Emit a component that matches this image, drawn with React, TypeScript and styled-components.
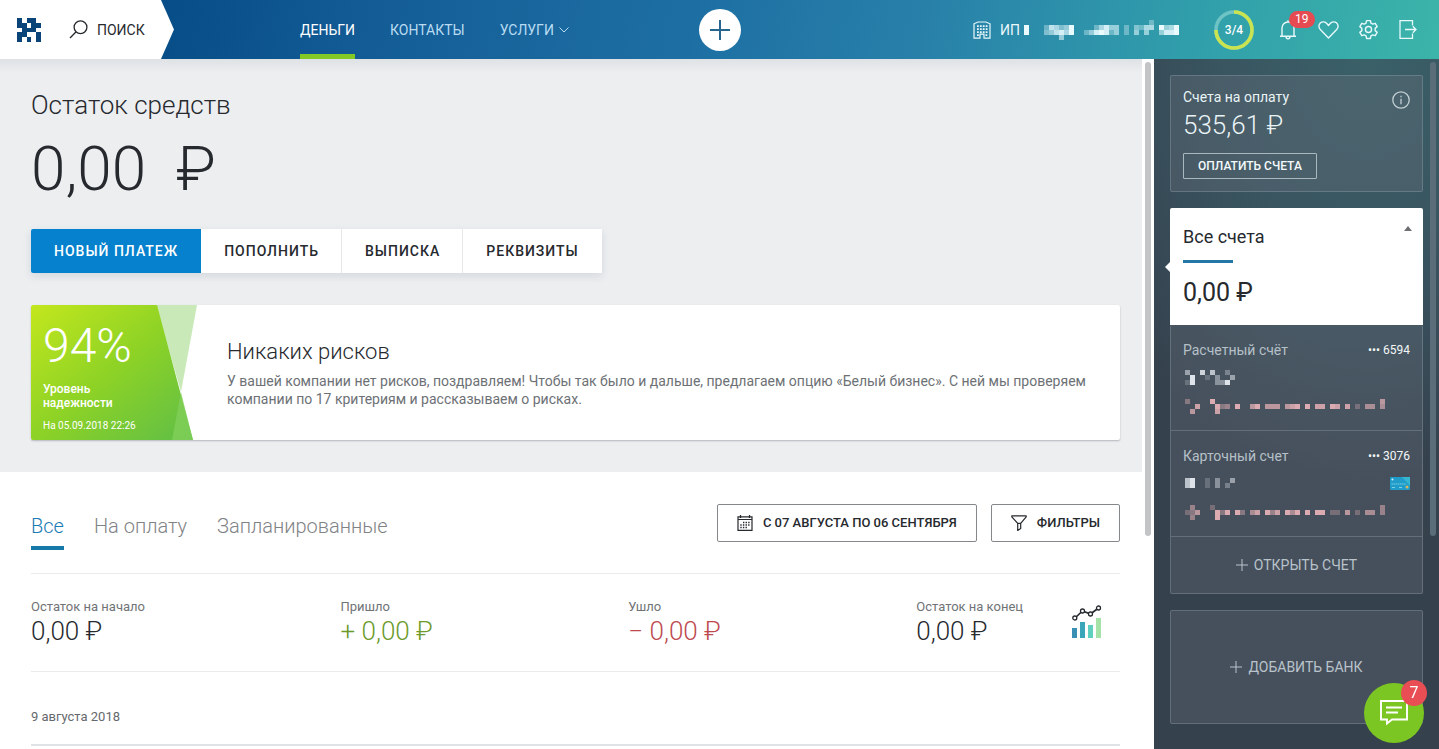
import React from "react";
import styled, { createGlobalStyle } from "styled-components";

const GlobalStyle = createGlobalStyle`
  * { box-sizing: border-box; }
  html, body { margin: 0; height: 100%; }
  #root { height: 100vh; }
  body {
    font-family: Roboto, "Open Sans", sans-serif;
    color: #26292e;
    background: #fff;
    overflow: hidden;
  }
  button { font-family: inherit; cursor: pointer; margin: 0; }
  a { text-decoration: none; }
  p, h1, h2 { margin: 0; }
  svg { display: block; flex: none; }
`;

const Page = styled.div`
  display: flex;
  flex-direction: column;
  height: 100vh;
`;

/* ---------- header ---------- */

const Header = styled.header`
  flex: none;
  display: grid;
  grid-template-columns: 1fr auto 1fr;
  height: 59px;
  background: linear-gradient(100deg, #074d87 11%, #155f98 29%, #1d6fa3 48%, #2880a9 64%, #319fab 83%, #3bb4a9 100%);
`;

const HeaderLeft = styled.div`
  display: flex;
`;

const Brand = styled.div`
  flex: none;
  display: flex;
  align-items: center;
  gap: 28px;
  width: 174px;
  padding-left: 17px;
  background: #fff;
  clip-path: polygon(0 0, 161px 0, 100% 50%, 161px 100%, 0 100%);
`;

const SearchButton = styled.button`
  display: flex;
  align-items: center;
  gap: 9px;
  padding: 0;
  border: 0;
  background: none;
  color: #26292e;
  font-size: 14px;
  line-height: 20px;
`;

const Nav = styled.nav`
  display: flex;
  gap: 35px;
  padding-left: 126px;
`;

const NavLink = styled.a<{ $active?: boolean }>`
  display: flex;
  align-items: center;
  gap: 5px;
  padding-top: 5px;
  border-bottom: 5px solid ${(p) => (p.$active ? "#83c926" : "transparent")};
  color: ${(p) => (p.$active ? "#fff" : "#b9dcf2")};
  font-size: 14px;
  line-height: 20px;
`;

const AddButton = styled.button`
  align-self: center;
  display: grid;
  place-items: center;
  width: 42px;
  height: 42px;
  padding: 0;
  border: 0;
  border-radius: 50%;
  background: #fff;
  color: #26658f;
`;

const HeaderRight = styled.div`
  display: flex;
  align-items: center;
  justify-content: flex-end;
  padding-right: 20px;
  color: #e8f8fb;
`;

const Company = styled.div`
  display: flex;
  align-items: center;
  gap: 9px;
  margin-right: 35px;
  font-size: 14px;
  line-height: 20px;
`;

const CompanyName = styled.span`
  display: flex;
  align-items: center;
  gap: 4px;
`;

const Progress = styled.div`
  display: grid;
  place-items: center;
  width: 40px;
  height: 40px;
  margin-right: 23px;
  & > * { grid-area: 1 / 1; }
  font-size: 12px;
  font-weight: 500;
  line-height: 16px;
  color: #fff;
`;

const IconRow = styled.div`
  display: flex;
  gap: 18px;
`;

const IconButton = styled.button`
  position: relative;
  display: grid;
  place-items: center;
  width: 22px;
  height: 24px;
  padding: 0;
  border: 0;
  background: none;
  color: #e8f8fb;
`;

const Badge = styled.span`
  position: absolute;
  top: -7px;
  left: 12px;
  padding: 0 6px;
  border-radius: 9px;
  background: #e64b52;
  color: #fff;
  font-size: 12px;
  line-height: 17px;
`;

/* ---------- main ---------- */

const Body = styled.div`
  flex: 1;
  min-height: 0;
  display: flex;
`;

const Main = styled.main`
  flex: 1;
  min-width: 0;
  overflow: hidden;
`;

const ScrollTrack = styled.div<{ $dark?: boolean }>`
  flex: none;
  width: ${(p) => (p.$dark ? "16px" : "12px")};
  padding: 3px ${(p) => (p.$dark ? "3px 0 7px" : "3px 0 3px")};
`;

const ScrollThumb = styled.div<{ $dark?: boolean }>`
  height: 69%;
  border-radius: 3px;
  background: ${(p) => (p.$dark ? "#5b6d78" : "#c2c4c6")};
`;

const Hero = styled.section`
  padding: 30px 22px 32px 31px;
  background: linear-gradient(#dfe2e5, #eceef0 14px);
`;

const HeroTitle = styled.h1`
  font-size: 26px;
  font-weight: 300;
  line-height: 32px;
`;

const HeroAmount = styled.p`
  display: flex;
  gap: 30px;
  margin: 12px 0 24px;
  font-size: 62px;
  font-weight: 300;
  line-height: 72px;
`;

const Actions = styled.div`
  display: inline-flex;
  box-shadow: 0 3px 8px rgba(40, 60, 80, 0.12);
`;

const ActionButton = styled.button<{ $primary?: boolean }>`
  height: 44px;
  padding: 0 23px;
  border: 0;
  border-radius: ${(p) => (p.$primary ? "2px 0 0 2px" : "0")};
  background: ${(p) => (p.$primary ? "#0581cd" : "#fff")};
  color: ${(p) => (p.$primary ? "#fff" : "#26292e")};
  font-size: 14px;
  font-weight: 500;
  line-height: 20px;
  letter-spacing: 1px;
  & + & { box-shadow: inset -1px 0 #e6e8ea; }
  &:last-child { box-shadow: none; }
`;

const Banner = styled.section`
  display: flex;
  height: 135px;
  margin-top: 32px;
  border-radius: 2px;
  background: #fff;
  box-shadow: 0 1px 2px rgba(30, 40, 50, 0.28);
  overflow: hidden;
`;

const Score = styled.div`
  display: grid;
  flex: none;
  width: 166px;
  & > * { grid-area: 1 / 1; }
`;

const ScoreText = styled.div`
  padding: 13px 12px 0;
  color: #fff;
  z-index: 1;
`;

const ScoreValue = styled.p`
  font-size: 48px;
  font-weight: 300;
  line-height: 56px;
`;

const ScoreLabel = styled.p`
  margin-top: 8px;
  font-size: 12px;
  font-weight: 500;
  line-height: 14px;
`;

const ScoreDate = styled.p`
  margin-top: 9px;
  font-size: 10px;
  line-height: 14px;
`;

const BannerText = styled.div`
  padding: 31px 30px 0;
`;

const BannerTitle = styled.h2`
  font-size: 22px;
  font-weight: 300;
  line-height: 32px;
`;

const BannerCopy = styled.p`
  margin-top: 4px;
  color: #6d7175;
  font-size: 14px;
  line-height: 18px;
`;

const Operations = styled.section`
  padding: 32px 22px 0 31px;
`;

const FilterBar = styled.div`
  display: flex;
  align-items: flex-start;
  justify-content: space-between;
  height: 70px;
  border-bottom: 1px solid #e9ebec;
`;

const Tabs = styled.div`
  display: flex;
  gap: 30px;
`;

const Tab = styled.button<{ $active?: boolean }>`
  height: 46px;
  padding: 2px 0 0;
  border: 0;
  border-bottom: 4px solid ${(p) => (p.$active ? "#167aa8" : "transparent")};
  background: none;
  color: ${(p) => (p.$active ? "#1a7bb5" : "#7f8386")};
  font-size: 20px;
  font-weight: 300;
  line-height: 28px;
`;

const FilterButtons = styled.div`
  display: flex;
  gap: 14px;
`;

const OutlineButton = styled.button`
  display: flex;
  align-items: center;
  gap: 10px;
  height: 38px;
  padding: 0 19px;
  border: 1px solid #85888b;
  border-radius: 2px;
  background: #fff;
  color: #26292e;
  font-size: 13px;
  font-weight: 500;
  line-height: 20px;
`;

const Summary = styled.div`
  display: flex;
  align-items: center;
  gap: 49px;
  height: 98px;
  padding: 0 18px 2px 0;
  border-bottom: 1px solid #e9ebec;
`;

const Stats = styled.dl`
  flex: 1;
  display: flex;
  justify-content: space-between;
  margin: 0;
`;

const StatLabel = styled.dt`
  color: #6f7376;
  font-size: 13px;
  line-height: 18px;
`;

const StatValue = styled.dd<{ $tone?: string }>`
  margin: 0;
  color: ${(p) => p.$tone || "#26292e"};
  font-size: 26px;
  font-weight: 300;
  line-height: 30px;
`;

const DayTitle = styled.h2`
  padding: 36px 0 18px;
  border-bottom: 2px solid #e0e3e5;
  color: #65696d;
  font-size: 13px;
  font-weight: 400;
  line-height: 18px;
`;

/* ---------- sidebar ---------- */

const Sidebar = styled.aside`
  flex: none;
  display: flex;
  width: 285px;
  padding-left: 16px;
  background: radial-gradient(ellipse 330px 420px at 75% 0, #3a6068 0%, #395560 45%, #35414d 100%);
`;

const SidebarList = styled.div`
  flex: 1;
  display: flex;
  flex-direction: column;
  gap: 16px;
  padding-top: 16px;
`;

const DarkCard = styled.section`
  border: 1px solid rgba(190, 210, 220, 0.24);
  border-radius: 2px;
  background: rgba(105, 110, 122, 0.34);
`;

const BillsCard = styled(DarkCard)`
  display: flex;
  justify-content: space-between;
  padding: 12px;
  height: 117px;
  color: #eaf4f6;
`;

const AccountsCard = styled(DarkCard)`
  border-top: 0;
`;

const BillsLabel = styled.p`
  font-size: 14px;
  line-height: 18px;
`;

const BillsAmount = styled.p`
  margin: 4px 0 13px;
  font-size: 26px;
  font-weight: 300;
  line-height: 30px;
`;

const PayButton = styled.button`
  display: block;
  height: 26px;
  padding: 0 14px;
  border: 1px solid #a9b8bf;
  border-radius: 1px;
  background: none;
  color: #f4fafb;
  font-size: 12px;
  font-weight: 500;
  line-height: 16px;
`;

const InfoButton = styled.button`
  align-self: flex-start;
  padding: 3px 0 0;
  border: 0;
  background: none;
  color: #c3d0d5;
`;

const AllAccounts = styled.div`
  position: relative;
  height: 117px;
  padding: 17px 11px 0 13px;
  border-radius: 2px 2px 0 0;
  background: #fff;
  &::before {
    content: "";
    position: absolute;
    left: -5px;
    top: 54px;
    border: 5px solid transparent;
    border-left: 0;
    border-right-color: #fff;
  }
`;

const AllHead = styled.div`
  display: flex;
  justify-content: space-between;
`;

const AllTitle = styled.h2`
  font-size: 18px;
  font-weight: 400;
  line-height: 24px;
`;

const Underline = styled.div`
  width: 50px;
  height: 3px;
  margin: 11px 0 15px;
  background: #2577a8;
`;

const AllAmount = styled.p`
  font-size: 25px;
  line-height: 30px;
`;

const AccountItem = styled.a`
  display: block;
  height: 106px;
  padding: 16px 12px 0;
  border-bottom: 1px solid rgba(190, 210, 220, 0.24);
`;

const AccountHead = styled.div`
  display: flex;
  justify-content: space-between;
  margin-bottom: 10px;
  font-size: 14px;
  line-height: 18px;
`;

const AccountName = styled.span`
  color: #b6c0c8;
`;

const AccountNumber = styled.span`
  color: #f4f7f9;
  font-size: 12px;
`;

const AccountRow = styled.div`
  display: flex;
  align-items: center;
  justify-content: space-between;
  height: 16px;
  margin-bottom: 13px;
  padding-left: 2px;
`;

const LinkButton = styled.button<{ $tall?: boolean }>`
  display: flex;
  align-items: center;
  justify-content: center;
  gap: 6px;
  width: 100%;
  height: ${(p) => (p.$tall ? "112px" : "56px")};
  padding: 0;
  border: 0;
  background: none;
  color: #b9c3cb;
  font-size: 14px;
  line-height: 20px;
`;

const ChatButton = styled.button`
  position: fixed;
  right: 15px;
  bottom: 6px;
  display: grid;
  place-items: center;
  width: 60px;
  height: 60px;
  padding: 0;
  border: 0;
  border-radius: 50%;
  background: #7cc623;
  color: #fff;
`;

const ChatBadge = styled.span`
  position: absolute;
  top: -3px;
  right: -3px;
  width: 26px;
  height: 26px;
  border-radius: 50%;
  background: #e84e54;
  font-size: 16px;
  line-height: 26px;
  text-align: center;
`;

/* ---------- drawings ---------- */

const LOGO = ["10110", "11011", "01110", "11001", "10101"];

const Logo = () => (
  <svg width="24" height="24" viewBox="0 0 5 5" fill="#0b4478" shapeRendering="crispEdges" role="img" aria-label="Банк">
    {LOGO.map((row, y) => row.split("").map((c, x) => c === "1" && <rect key={`${x}-${y}`} x={x} y={y} width="1" height="1" />))}
  </svg>
);

/* Hidden values are drawn as rows of 5px blocks; each digit is the brightness of a block. */
const Mosaic = ({ rows, tint }: { rows: string[]; tint: string }) => (
  <svg width={rows[0].length * 5} height={rows.length * 5} fill={tint} shapeRendering="crispEdges" aria-hidden="true">
    {rows.map((row, y) =>
      row.split("").map((c, x) =>
        c === "." ? null : <rect key={`${x}-${y}`} x={x * 5} y={y * 5} width="5" height="5" opacity={Number(c) / 9} />
      )
    )}
  </svg>
);

const NAME_ROWS = [
  ".........................3.....",
  "9...376459....36855.3.4366.9569",
  "9...457869..3589835.3.5.5..5889",
  ".......5.......................",
];
const BALANCE_ONE = ["5..8.7..3.", ".9..2.4..5", "29....449."];
const DETAILS_ONE = [
  "4....9.................................7",
  "..8...945.9..79.777.789.9.88.98.8.3.66.6",
  ".7....8.................................",
];
const BALANCE_TWO = ["79..2.4..5", "79..2.4.3."];
const DETAILS_TWO = [
  ".5...3.................................5",
  "347...949.94.68.958.969.9.99.33.7.3.66.5",
  ".5....9.................................",
];
const frost = "#e9fbff";
const grey = "#dfe3ea";
const pink = "#dcabb1";

const PlusIcon = ({ size, weight = 1 }: { size: number; weight?: number }) => (
  <svg width={size} height={size} viewBox="0 0 20 20" fill="none" stroke="currentColor" strokeWidth={(weight * 20) / size}>
    <path d="M10 0v20M0 10h20" />
  </svg>
);

const SearchIcon = () => (
  <svg width="19" height="19" viewBox="0 0 19 19" fill="none" stroke="currentColor" strokeWidth="1.3">
    <circle cx="11.5" cy="7.3" r="6.4" />
    <path d="M6.9 12 1 18" />
  </svg>
);

const ChevronIcon = () => (
  <svg width="10" height="6" viewBox="0 0 10 6" fill="none" stroke="currentColor" strokeWidth="1">
    <path d="M.5.5 5 5 9.5.5" />
  </svg>
);

const BuildingIcon = () => (
  <svg width="18" height="18" viewBox="0 0 18 18" fill="none" stroke="currentColor" strokeWidth="1.2">
    <path d="M7 17.2H1V2.8L5 1h8l4 1.8v14.4h-6v-4H7z" />
    <path d="M4 5.2h10.5M4 8.2h10.5M4 11.2h10.5M4 14.2h2M12.5 14.2h2" strokeWidth="1.8" strokeDasharray="1.8 1.1" />
  </svg>
);

const RingIcon = () => (
  <svg width="40" height="40" viewBox="0 0 40 40" fill="none" strokeWidth="3.6">
    <circle cx="20" cy="20" r="18" stroke="#6ec3c4" />
    <path d="M20 2a18 18 0 1 1-18 18" stroke="#c9e450" />
  </svg>
);

const BellIcon = () => (
  <svg width="18" height="20" viewBox="0 0 18 20" fill="none" stroke="currentColor" strokeWidth="1.4">
    <path d="M1 16.3h16M3 16.3V8a6 6 0 0 1 12 0v8.3M7 16.5a2 2.3 0 0 0 4 0M9 2V.3" />
  </svg>
);

const HeartIcon = () => (
  <svg width="21" height="18" viewBox="0 0 21 18" fill="none" stroke="currentColor" strokeWidth="1.4" strokeLinejoin="round">
    <path d="M10.5 17 2.3 8.6C.4 6.6.5 3.7 2.3 2c1.9-1.7 5-1.500 6.500.5l1.700 2 1.700-2C13.700.5 16.800.3 18.700 2c1.800 1.700 1.900 4.600 0 6.600z" />
  </svg>
);

const GearIcon = () => (
  <svg width="21" height="21" viewBox="0 0 24 24" fill="none" stroke="currentColor" strokeWidth="1.6" strokeLinejoin="round">
    <circle cx="12" cy="12" r="3.5" />
    <path d="M9.8 1.8h4.4l.6 3 2 1.1 2.9-1 2.2 3.8-2.3 2v2.6l2.3 2-2.2 3.8-2.9-1-2 1.1-.6 3H9.8l-.6-3-2-1.1-2.9 1-2.2-3.8 2.3-2v-2.6l-2.3-2 2.2-3.8 2.9 1 2-1.1z" />
  </svg>
);

const ExitIcon = () => (
  <svg width="18" height="19" viewBox="0 0 18 19" fill="none" stroke="currentColor" strokeWidth="1.3">
    <path d="M13.5 5.5V.7H1v17.6h12.5v-4.8M6 9.500h11M13.8 6.3 17 9.5l-3.2 3.2" />
  </svg>
);

const CalendarIcon = () => (
  <svg width="16" height="16" viewBox="0 0 16 16" fill="none" stroke="currentColor" strokeWidth="1.2">
    <path d="M1 1.8h14v13.5H1zM1 4.5h14M3.5 0v3M12.5 0v3" />
    <path d="M6 7.5h7.5M3.3 10h10.2M3.3 12.5h7.7" strokeWidth="1.4" strokeDasharray="1.4 1.2" />
  </svg>
);

const FunnelIcon = () => (
  <svg width="16" height="16" viewBox="0 0 16 16" fill="none" stroke="currentColor" strokeWidth="1.2" strokeLinejoin="round">
    <path d="M.8.8h14.4v1L9.7 8.3v5.2l-3 1.9V8.3L.8 1.8zM6.7 8.3h3" />
  </svg>
);

const ChartIcon = () => (
  <svg width="30" height="33" viewBox="0 0 30 33" fill="none">
    <rect x="0" y="23" width="5" height="10" fill="#3a8fb5" />
    <rect x="8" y="17" width="5" height="16" fill="#3ba6ba" />
    <rect x="16" y="20" width="5" height="13" fill="#5fcfc0" />
    <rect x="24" y="13" width="5" height="20" fill="#a5e2a8" />
    <path d="m3 13 7.5-7 8 3 8-6" stroke="#26292e" strokeWidth="1.6" />
    <g fill="#fff" stroke="#26292e" strokeWidth="1.3">
      <circle cx="2.8" cy="13" r="2" />
      <circle cx="10.5" cy="6" r="2" />
      <circle cx="18.5" cy="9" r="2" />
      <circle cx="26.5" cy="3" r="2" />
    </g>
  </svg>
);

const InfoIcon = () => (
  <svg width="18" height="18" viewBox="0 0 18 18" fill="none" stroke="currentColor" strokeWidth="1.3">
    <circle cx="9" cy="9" r="8.2" />
    <path d="M9 7.7v5.5M9 4.8v1.4" />
  </svg>
);

const CaretIcon = () => (
  <svg width="8" height="6" viewBox="0 0 8 6" fill="#6d6f72">
    <path d="M0 6 4 1l4 5z" />
  </svg>
);

const CardIcon = () => (
  <svg width="20" height="13" viewBox="0 0 20 13">
    <rect width="20" height="13" rx="1" fill="#1f9cc9" />
    <path d="M12 0h8v9z" fill="#35b5d0" />
    <circle cx="2.5" cy="2.5" r="1" fill="#d5f1f5" />
    <path d="M1.5 7h14" stroke="#7fd0e2" strokeDasharray="1.5 .6" />
    <path d="M2 10.5h3M9 10.5h3" stroke="#7fd0e2" />
    <circle cx="17" cy="10" r="1.5" fill="#d9b65c" />
  </svg>
);

const ChatIcon = () => (
  <svg width="28" height="26" viewBox="0 0 28 26" fill="none" stroke="currentColor" strokeWidth="1.9">
    <path d="M1 1h26v18.5H12l-5 4v-4H1zM6 7.5h16M6 12.5h12" />
  </svg>
);

const ScoreShape = () => (
  <svg width="166" height="135" viewBox="0 0 166 135">
    <defs>
      <linearGradient id="score" x1="0" y1="0" x2="1" y2="1">
        <stop offset="0" stopColor="#c3e71d" />
        <stop offset=".5" stopColor="#8dd226" />
        <stop offset="1" stopColor="#5fbe47" />
      </linearGradient>
    </defs>
    <path d="M125 0h41l-16 87z" fill="#c9eab8" />
    <path d="M0 0h126l36 135H0z" fill="url(#score)" />
    <path d="m150 87 12 48h-21z" fill="#84d25c" opacity=".7" />
  </svg>
);

/* ---------- page ---------- */

const stats = [
  { label: "Остаток на начало", value: "0,00 ₽" },
  { label: "Пришло", value: "+ 0,00 ₽", tone: "#6c9a2b" },
  { label: "Ушло", value: "− 0,00 ₽", tone: "#bd4a50" },
  { label: "Остаток на конец", value: "0,00 ₽" },
];

export default function App() {
  return (
    <Page>
      <GlobalStyle />
      <Header>
        <HeaderLeft>
          <Brand>
            <Logo />
            <SearchButton><SearchIcon />ПОИСК</SearchButton>
          </Brand>
          <Nav>
            <NavLink href="#money" $active>ДЕНЬГИ</NavLink>
            <NavLink href="#contacts">КОНТАКТЫ</NavLink>
            <NavLink href="#services">УСЛУГИ <ChevronIcon /></NavLink>
          </Nav>
        </HeaderLeft>
        <AddButton aria-label="Создать"><PlusIcon size={20} weight={2} /></AddButton>
        <HeaderRight>
          <Company>
            <BuildingIcon />
            <CompanyName>ИП <Mosaic rows={NAME_ROWS} tint={frost} /></CompanyName>
          </Company>
          <Progress><RingIcon /><span>3/4</span></Progress>
          <IconRow>
            <IconButton aria-label="Уведомления"><BellIcon /><Badge>19</Badge></IconButton>
            <IconButton aria-label="Избранное"><HeartIcon /></IconButton>
            <IconButton aria-label="Настройки"><GearIcon /></IconButton>
            <IconButton aria-label="Выход"><ExitIcon /></IconButton>
          </IconRow>
        </HeaderRight>
      </Header>

      <Body>
        <Main>
          <Hero>
            <HeroTitle>Остаток средств</HeroTitle>
            <HeroAmount><span>0,00</span><span>₽</span></HeroAmount>
            <Actions>
              <ActionButton $primary>НОВЫЙ ПЛАТЕЖ</ActionButton>
              <ActionButton>ПОПОЛНИТЬ</ActionButton>
              <ActionButton>ВЫПИСКА</ActionButton>
              <ActionButton>РЕКВИЗИТЫ</ActionButton>
            </Actions>
            <Banner>
              <Score>
                <ScoreShape />
                <ScoreText>
                  <ScoreValue>94%</ScoreValue>
                  <ScoreLabel>Уровень<br />надежности</ScoreLabel>
                  <ScoreDate>На 05.09.2018 22:26</ScoreDate>
                </ScoreText>
              </Score>
              <BannerText>
                <BannerTitle>Никаких рисков</BannerTitle>
                <BannerCopy>
                  У вашей компании нет рисков, поздравляем! Чтобы так было и дальше, предлагаем опцию «Белый бизнес». С ней мы проверяем компании по 17 критериям и рассказываем о рисках.
                </BannerCopy>
              </BannerText>
            </Banner>
          </Hero>

          <Operations>
            <FilterBar>
              <Tabs>
                <Tab $active>Все</Tab>
                <Tab>На оплату</Tab>
                <Tab>Запланированные</Tab>
              </Tabs>
              <FilterButtons>
                <OutlineButton><CalendarIcon />С 07 АВГУСТА ПО 06 СЕНТЯБРЯ</OutlineButton>
                <OutlineButton><FunnelIcon />ФИЛЬТРЫ</OutlineButton>
              </FilterButtons>
            </FilterBar>
            <Summary>
              <Stats>
                {stats.map((s) => (
                  <div key={s.label}>
                    <StatLabel>{s.label}</StatLabel>
                    <StatValue $tone={s.tone}>{s.value}</StatValue>
                  </div>
                ))}
              </Stats>
              <ChartIcon />
            </Summary>
            <DayTitle>9 августа 2018</DayTitle>
          </Operations>
        </Main>
        <ScrollTrack><ScrollThumb /></ScrollTrack>

        <Sidebar>
          <SidebarList>
            <BillsCard>
              <div>
                <BillsLabel>Счета на оплату</BillsLabel>
                <BillsAmount>535,61 ₽</BillsAmount>
                <PayButton>ОПЛАТИТЬ СЧЕТА</PayButton>
              </div>
              <InfoButton aria-label="Подробнее"><InfoIcon /></InfoButton>
            </BillsCard>
            <div>
              <AllAccounts>
                <AllHead>
                  <AllTitle>Все счета</AllTitle>
                  <CaretIcon />
                </AllHead>
                <Underline />
                <AllAmount>0,00 ₽</AllAmount>
              </AllAccounts>
              <AccountsCard>
                <AccountItem href="#6594">
                  <AccountHead>
                    <AccountName>Расчетный счёт</AccountName>
                    <AccountNumber>••• 6594</AccountNumber>
                  </AccountHead>
                  <AccountRow><Mosaic rows={BALANCE_ONE} tint={grey} /></AccountRow>
                  <AccountRow><Mosaic rows={DETAILS_ONE} tint={pink} /></AccountRow>
                </AccountItem>
                <AccountItem href="#3076">
                  <AccountHead>
                    <AccountName>Карточный счет</AccountName>
                    <AccountNumber>••• 3076</AccountNumber>
                  </AccountHead>
                  <AccountRow><Mosaic rows={BALANCE_TWO} tint={grey} /><CardIcon /></AccountRow>
                  <AccountRow><Mosaic rows={DETAILS_TWO} tint={pink} /></AccountRow>
                </AccountItem>
                <LinkButton><PlusIcon size={12} />ОТКРЫТЬ СЧЕТ</LinkButton>
              </AccountsCard>
            </div>
            <DarkCard>
              <LinkButton $tall><PlusIcon size={12} />ДОБАВИТЬ БАНК</LinkButton>
            </DarkCard>
          </SidebarList>
          <ScrollTrack $dark><ScrollThumb $dark /></ScrollTrack>
        </Sidebar>
      </Body>
      <ChatButton aria-label="Чат"><ChatIcon /><ChatBadge>7</ChatBadge></ChatButton>
    </Page>
  );
}
